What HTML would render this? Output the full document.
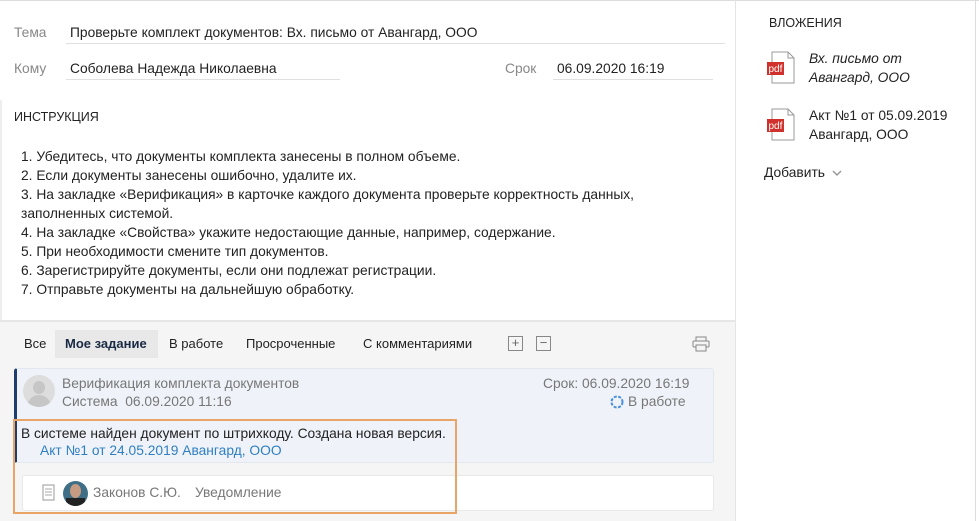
<!DOCTYPE html>
<html><head><meta charset="utf-8"><style>
*{margin:0;padding:0;box-sizing:border-box}
body{width:979px;height:521px;background:#fff;font-family:"Liberation Sans",sans-serif;font-size:13.8px;color:#222;position:relative;overflow:hidden}
.a{position:absolute;white-space:nowrap}
.lbl{color:#888}
.line{position:absolute;height:1px;background:#e0e0e0}
.g{color:#777}
.blue{color:#2f7fc1}
</style></head><body>
<div class="a" style="left:0;top:0;width:979px;height:1px;background:#ddd"></div>
<div class="a" style="left:975px;top:0;width:1px;height:521px;background:#ddd"></div>
<div class="a" style="left:735px;top:0;width:1px;height:521px;background:#e4e4e4"></div>

<div class="a lbl" style="left:14px;top:25px">Тема</div>
<div class="a" style="left:70px;top:25px">Проверьте комплект документов: Вх. письмо от Авангард, ООО</div>
<div class="line" style="left:66px;top:43px;width:659px"></div>
<div class="a lbl" style="left:14px;top:61px">Кому</div>
<div class="a" style="left:70px;top:61px">Соболева Надежда Николаевна</div>
<div class="line" style="left:66px;top:79px;width:274px"></div>
<div class="a lbl" style="left:505px;top:61px">Срок</div>
<div class="a" style="left:557px;top:61px">06.09.2020 16:19</div>
<div class="line" style="left:553px;top:79px;width:160px"></div>
<div class="a" style="left:0;top:100px;width:2px;height:220px;background:#eee"></div>

<div class="a" style="left:14px;top:110px;font-size:12.5px">ИНСТРУКЦИЯ</div>
<div class="a" style="left:21px;top:147px;line-height:19px">1. Убедитесь, что документы комплекта занесены в полном объеме.<br>2. Если документы занесены ошибочно, удалите их.<br>3. На закладке «Верификация» в карточке каждого документа проверьте корректность данных,<br>заполненных системой.<br>4. На закладке «Свойства» укажите недостающие данные, например, содержание.<br>5. При необходимости смените тип документов.<br>6. Зарегистрируйте документы, если они подлежат регистрации.<br>7. Отправьте документы на дальнейшую обработку.</div>

<div class="a" style="left:0;top:320px;width:735px;height:201px;background:#f5f5f5;border-top:2px solid #e6e6e6"></div>
<div class="a" style="left:24px;top:336px;font-size:13px">Все</div>
<div class="a" style="left:55px;top:330px;width:103px;height:28px;background:#e8e8e8"></div>
<div class="a" style="left:65px;top:336px;font-weight:bold;color:#1a2a44;font-size:13px">Мое задание</div>
<div class="a" style="left:169px;top:336px;font-size:13px">В работе</div>
<div class="a" style="left:246px;top:336px;font-size:13px">Просроченные</div>
<div class="a" style="left:363px;top:336px;font-size:13px">С комментариями</div>
<div class="a" style="left:508px;top:336px;width:15px;height:15px;border:1px solid #888;font-size:13px;line-height:12px;text-align:center;color:#666">+</div>
<div class="a" style="left:536px;top:336px;width:15px;height:15px;border:1px solid #888;font-size:13px;line-height:12px;text-align:center;color:#666">−</div>
<svg class="a" style="left:692px;top:336px" width="18" height="16" viewBox="0 0 18 16"><rect x="4" y="1" width="10" height="4" fill="none" stroke="#888"/><rect x="1" y="5" width="16" height="6" rx="1" fill="none" stroke="#888"/><rect x="4" y="9" width="10" height="6" fill="#f5f5f5" stroke="#888"/></svg>

<div class="a" style="left:14px;top:368px;width:700px;height:95px;background:#eff3f9;border:1px solid #e3e8ef;border-left:3px solid #1e3f6e;border-radius:3px"></div>
<div class="a" style="left:23px;top:375px;width:32px;height:32px;border-radius:50%;background:#ddd;overflow:hidden"><div style="position:absolute;left:10px;top:6px;width:12px;height:13px;border-radius:50%;background:#c6c6c6"></div><div style="position:absolute;left:4px;top:20px;width:24px;height:16px;border-radius:12px 12px 0 0;background:#c6c6c6"></div></div>
<div class="a g" style="left:62px;top:376px">Верификация комплекта документов</div>
<div class="a g" style="left:62px;top:394px">Система&nbsp;&nbsp;06.09.2020 11:16</div>
<div class="a g" style="left:543px;top:376px">Срок: 06.09.2020 16:19</div>
<div class="a g" style="left:628px;top:394px">В работе</div>
<svg class="a" style="left:610px;top:395px" width="14" height="14" viewBox="0 0 14 14"><circle cx="7" cy="7" r="5.5" fill="none" stroke="#4a90d9" stroke-width="2" stroke-dasharray="3 1.5"/></svg>
<div class="a" style="left:21px;top:426px">В системе найден документ по штрихкоду. Создана новая версия.</div>
<div class="a blue" style="left:40px;top:443px">Акт №1 от 24.05.2019 Авангард, ООО</div>

<div class="a" style="left:22px;top:475px;width:692px;height:36px;background:#fff;border:1px solid #e8e8e8;border-radius:3px"></div>
<svg class="a" style="left:42px;top:484px" width="14" height="18" viewBox="0 0 14 18"><rect x="1" y="1" width="11" height="15" fill="none" stroke="#999"/><path d="M3 5h7M3 8h7M3 11h7" stroke="#aaa"/></svg>
<div class="a" style="left:63px;top:481px;width:25px;height:25px;border-radius:50%;background:#3f6f86;overflow:hidden"><div style="position:absolute;left:7px;top:3px;width:11px;height:14px;border-radius:50%;background:#c79a82"></div><div style="position:absolute;left:3px;top:17px;width:19px;height:10px;background:#222"></div></div>
<div class="a g" style="left:93px;top:485px">Законов С.Ю.</div>
<div class="a g" style="left:195px;top:485px">Уведомление</div>
<div class="a" style="left:13px;top:419px;width:444px;height:95px;border:2px solid #e9a567"></div>

<div class="a" style="left:769px;top:16px;font-size:12.5px">ВЛОЖЕНИЯ</div>
<svg class="a" style="left:767px;top:51px" width="30" height="33" viewBox="0 0 30 33"><path d="M5 1h16l6 6v25H5z" fill="#fff" stroke="#999"/><path d="M21 1v6h6" fill="none" stroke="#999"/><rect x="0" y="11" width="17" height="13" fill="#d0312d"/><text x="1.5" y="21" font-size="10" fill="#fff" font-family="Liberation Sans">pdf</text></svg>
<div class="a" style="left:809px;top:49px;font-style:italic;line-height:19px">Вх. письмо от<br>Авангард, ООО</div>
<svg class="a" style="left:767px;top:108px" width="30" height="33" viewBox="0 0 30 33"><path d="M5 1h16l6 6v25H5z" fill="#fff" stroke="#999"/><path d="M21 1v6h6" fill="none" stroke="#999"/><rect x="0" y="11" width="17" height="13" fill="#d0312d"/><text x="1.5" y="21" font-size="10" fill="#fff" font-family="Liberation Sans">pdf</text></svg>
<div class="a" style="left:809px;top:106px;line-height:19px">Акт №1 от 05.09.2019<br>Авангард, ООО</div>
<div class="a" style="left:764px;top:165px">Добавить</div>
<svg class="a" style="left:832px;top:169px" width="10" height="8" viewBox="0 0 10 8"><path d="M1 2l4 4 4-4" fill="none" stroke="#999" stroke-width="1.5"/></svg>
</body></html>
